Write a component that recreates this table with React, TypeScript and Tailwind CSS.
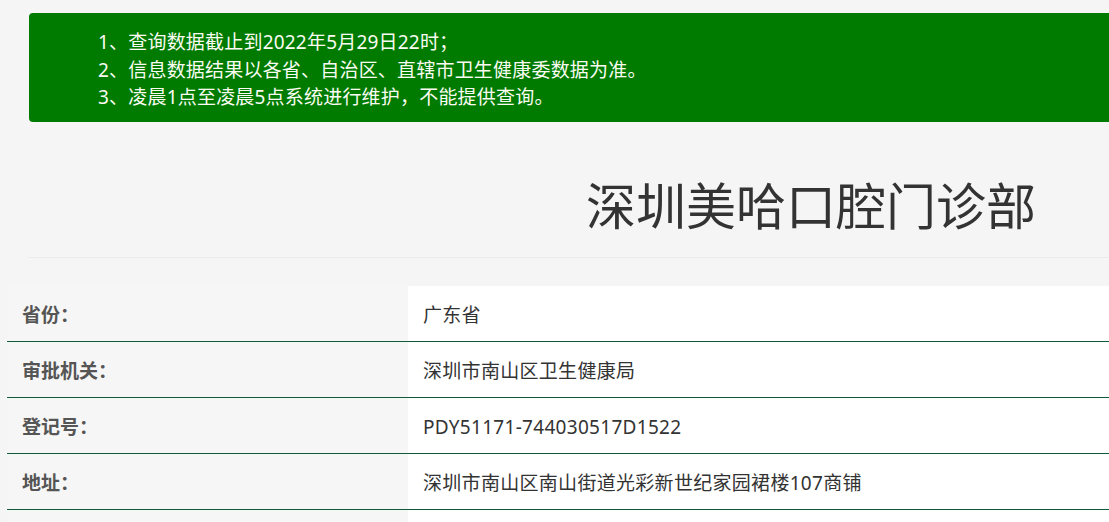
const notices = [
  "1、查询数据截止到2022年5月29日22时；",
  "2、信息数据结果以各省、自治区、直辖市卫生健康委数据为准。",
  "3、凌晨1点至凌晨5点系统进行维护，不能提供查询。",
];

const rows = [
  { label: "省份：", value: "广东省" },
  { label: "审批机关：", value: "深圳市南山区卫生健康局" },
  { label: "登记号：", value: "PDY51171-744030517D1522" },
  { label: "地址：", value: "深圳市南山区南山街道光彩新世纪家园裙楼107商铺" },
];

export default function App() {
  return (
    <div
      className="min-h-[522px] w-[1109px] overflow-hidden bg-[#f5f5f5]"
      style={{ fontFamily: '"Noto Sans", "Noto Sans CJK SC", sans-serif' }}
    >
      {/* notice banner */}
      <div className="ml-[29px] mt-[13px] h-[109px] rounded-l-[4px] bg-[#007b00] pl-[69px] pt-[16px] text-[19px] leading-[27.5px] text-[#fbfbf3]">
        {notices.map((n) => (
          <div key={n} className="tracking-[0.2px]">{n}</div>
        ))}
      </div>

      {/* title */}
      <div className="h-[136px] border-b border-[#ebebeb] ml-[28px]">
        <h1 className="pl-[558px] pt-[52px] text-[50px] leading-[64px] font-normal text-[#333]">
          深圳美哈口腔门诊部
        </h1>
      </div>

      {/* info table */}
      <div className="ml-[7px] mt-[28px]">
        {rows.map((row) => (
          <div key={row.label} className="grid grid-cols-[401px_1fr] h-[56px] border-b border-[#0f5c3a]">
            <div className="flex items-center bg-[#f6f6f6] pl-[15px] pt-[4px] text-[19px] font-bold text-[#555]">
              {row.label}
            </div>
            <div className="flex items-center bg-white pl-[15px] pt-[4px] text-[19px] tracking-[0.3px] text-[#333]">
              {row.value}
            </div>
          </div>
        ))}
        <div className="grid grid-cols-[401px_1fr] h-[20px]">
          <div className="bg-[#f6f6f6]" />
          <div className="bg-white" />
        </div>
      </div>
    </div>
  );
}
